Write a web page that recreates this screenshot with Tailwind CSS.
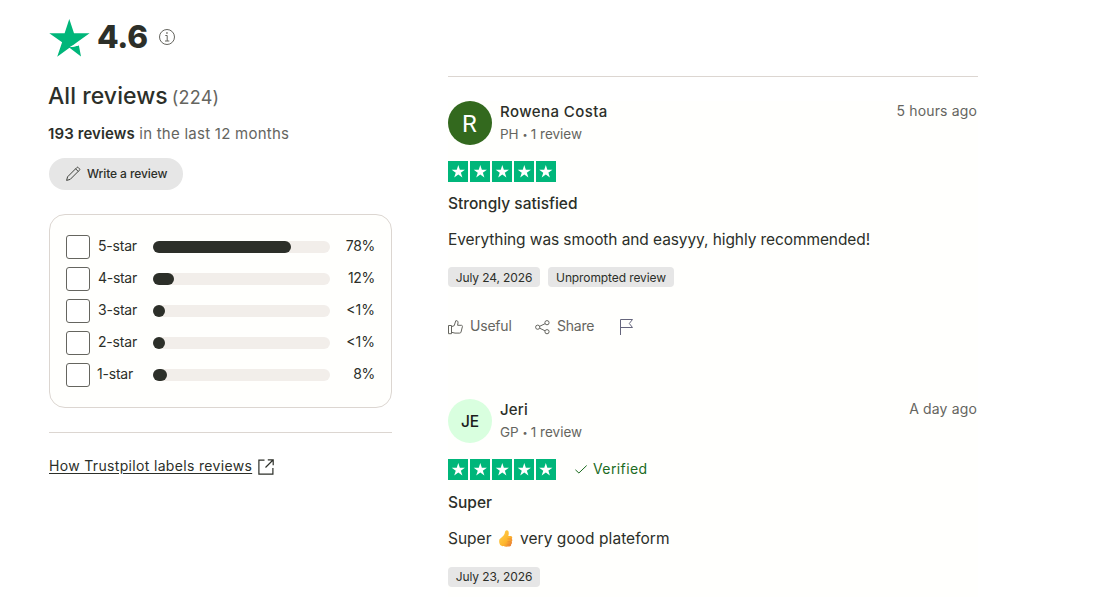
<!DOCTYPE html>
<html lang="en">
<head>
	<meta charset="UTF-8" />
	<meta name="viewport" content="width=device-width, initial-scale=1.0" />
	<script src="https://cdn.jsdelivr.net/npm/@tailwindcss/browser@4"></script>
	<title>All reviews</title>
</head>

<body class="bg-white font-['Inter',sans-serif] text-[#2c2f29] w-[1098px] h-[597px] overflow-hidden">
	<!-- shared symbols -->
	<svg class="hidden">
		<symbol id="stars" viewBox="0 0 108 21">
			<path fill="#00b67a" d="M0 0h20v21H0zM22 0h20v21H22zM44 0h20v21H44zM66 0h20v21H66zM88 0h20v21H88z" />
			<g fill="#fff">
				<path id="st" d="M10.3 3.9l1.55 4.8h5.05l-4.1 2.95 1.6 4.85-4.1-3-4.1 3 1.55-4.85L3.7 8.7h5.05zM10.3 13.5l2.9-.7 1.2 3.7z" />
				<use href="#st" x="22" /><use href="#st" x="44" /><use href="#st" x="66" /><use href="#st" x="87.5" />
			</g>
		</symbol>
	</svg>

	<div class="flex gap-14 pl-[49px]">
		<!-- summary -->
		<aside class="w-[343px] shrink-0 pt-[17px]">
			<div class="flex items-center h-10">
				<svg class="w-[41px] h-[39px]" viewBox="0 0 41 39"><path fill="#00b67a" d="M20.3 1l4.7 14.2h15.6L28 24.3l-6.8 4.9 8.7-1.8 2.1 11-11.5-8.7-12.3 9 4.9-14.4L.3 15.2h15.3z" /><path fill="#fff" d="M20.9 28.3l8.2-1.7-.2 1.1-5.8 1.4z" /></svg>
				<span class="w-[69px] pl-[7px] text-[31.5px] leading-10 font-extrabold tracking-[-0.3px]">4.6</span>
				<svg class="w-4 h-4" viewBox="0 0 16 16" fill="none" stroke="#65655f"><circle cx="8" cy="8" r="7.5" /><path d="M6.300 6.500H8.200V12M6 12h4.300" /><path fill="#65655f" stroke="none" d="M7.200 3.200h1.500v1.500H7.200z" /></svg>
			</div>
			<h2 class="mt-[23px] h-8 leading-8 text-[23px] font-medium whitespace-nowrap"><span class="-ml-px tracking-[0.05px]">All reviews</span> <span class="text-[18px] font-normal text-[#65655f] -ml-0.5 tracking-[0.2px]">(224)</span></h2>
			<p class="mt-2.5 h-6 leading-6 text-[15px] text-[#65655f] whitespace-nowrap"><b class="font-semibold text-[#2c2f29] -ml-px tracking-[0.1px]">193 reviews</b><span class="tracking-[0.25px]"> in the last 12 months</span></p>
			<button class="mt-3 flex items-center w-[134px] h-8 rounded-full bg-[#e6e6e6] pl-4 text-[12px] font-medium tracking-[-0.1px] whitespace-nowrap">
				<svg class="w-4 h-4 mr-1.5" viewBox="0 0 16 16" fill="none" stroke="#2c2f29" stroke-width=".9"><path d="M1.600 14.400l1-3.600 9.200-9.200c.5-.5 1-.5 1.500 0l1.100 1.100c.5.5.5 1 0 1.500l-9.200 9.200zM10.600 2.800l2.600 2.600" /></svg>
				Write a review
			</button>

			<div class="mt-6 h-[194px] rounded-2xl border border-[#dcd6d1] bg-[#fffffd] px-4 pt-4 text-[14px]">
				<div class="flex items-center h-8"><i class="w-6 h-6 rounded-[3px] border border-[#65655f] bg-white"></i><span class="ml-2 w-[55px] pb-[3px] tracking-[-0.2px]">5-star</span><div class="w-[177px] h-3 rounded-full bg-[#f2eeea]"><div class="h-3 rounded-full bg-[#2c2f29]" style="width:78%"></div></div><span class="ml-auto pb-[3px] tracking-[-0.3px]">78%</span></div>
				<div class="flex items-center h-8"><i class="w-6 h-6 rounded-[3px] border border-[#65655f] bg-white"></i><span class="ml-2 w-[55px] pb-[3px] tracking-[-0.3px]">4-star</span><div class="w-[177px] h-3 rounded-full bg-[#f2eeea]"><div class="h-3 rounded-full bg-[#2c2f29]" style="width:12%"></div></div><span class="ml-auto pb-[3px] tracking-[-0.3px]">12%</span></div>
				<div class="flex items-center h-8"><i class="w-6 h-6 rounded-[3px] border border-[#65655f] bg-white"></i><span class="ml-2 w-[55px] pb-[3px] tracking-[-0.2px]">3-star</span><div class="w-[177px] h-3 rounded-full bg-[#f2eeea]"><div class="h-3 rounded-full bg-[#2c2f29]" style="width:12px"></div></div><span class="ml-auto pb-[3px]">&lt;1%</span></div>
				<div class="flex items-center h-8"><i class="w-6 h-6 rounded-[3px] border border-[#65655f] bg-white"></i><span class="ml-2 w-[55px] pb-[3px] tracking-[-0.2px]">2-star</span><div class="w-[177px] h-3 rounded-full bg-[#f2eeea]"><div class="h-3 rounded-full bg-[#2c2f29]" style="width:12px"></div></div><span class="ml-auto pb-[3px]">&lt;1%</span></div>
				<div class="flex items-center h-8"><i class="w-6 h-6 rounded-[3px] border border-[#65655f] bg-white"></i><span class="ml-[7px] mr-px w-[55px] pb-[3px] tracking-[-0.2px]">1-star</span><div class="w-[177px] h-3 rounded-full bg-[#f2eeea]"><div class="h-3 rounded-full bg-[#2c2f29]" style="width:8%"></div></div><span class="ml-auto pb-[3px] tracking-[-0.3px]">8%</span></div>
			</div>

			<hr class="mt-6 border-[#dcd6d1]" />
			<a class="mt-[22px] flex items-center h-6 text-[14px] whitespace-nowrap">
				<span class="w-[209px] pb-[3px] underline underline-offset-2 tracking-[0.33px]">How Trustpilot labels reviews</span>
				<svg class="w-4 h-4" viewBox="0 0 16 16" fill="none" stroke="#2c2f29" stroke-width="1.2"><path d="M6.500 1.100H.9v14h14V9M9.800.8h5.400v5.400M15 1L7.500 8.500" /></svg>
			</a>
		</aside>

		<!-- review list -->
		<main class="w-[530px] pt-[76px]">
			<hr class="border-[#dcd6d1]" />
			<article class="mt-6 h-[298px] bg-[#fffffd]">
				<header class="flex h-11">
					<div class="w-11 h-11 pt-0.5 pr-px rounded-full bg-[#33691e] text-white text-[24px] flex items-center justify-center font-['Roboto',sans-serif]">R</div>
					<div class="ml-2 whitespace-nowrap">
						<div class="h-[22px] leading-[22px] text-[15px] font-medium tracking-[0.42px]">Rowena Costa</div>
						<div class="h-[22px] leading-[23px] text-[13.5px] text-[#65655f]">PH <span class="text-[9px] align-[1px]">•</span><span class="ml-0.5"></span>&#8202;1 review</div>
					</div>
					<time class="ml-auto pr-px leading-[19px] text-[14px] tracking-[0.15px] text-[#65655f]">5 hours ago</time>
				</header>
				<svg class="mt-4 w-[108px] h-[21px]"><use href="#stars" /></svg>
				<h3 class="mt-2.5 h-6 leading-6 text-[15.5px] font-medium whitespace-nowrap">Strongly satisfied</h3>
				<p class="mt-3 h-6 leading-6 text-[15.5px] tracking-[-0.09px] whitespace-nowrap">Everything was smooth and easyyy, highly recommended!</p>
				<div class="mt-[15px] flex gap-2 text-[12px] leading-[22px] whitespace-nowrap">
					<span class="w-[92px] h-5 rounded bg-[#e6e6e6] text-center tracking-[-0.1px]">July 24, 2026</span>
					<span class="w-[126px] h-5 rounded bg-[#e6e6e6] text-center tracking-[-0.1px]">Unprompted review</span>
				</div>
				<div class="mt-7 flex items-center h-6 text-[14px] text-[#65655f]">
					<svg class="w-4 h-4 mr-1.5" viewBox="0 0 16 16" fill="none" stroke="#65655f"><path d="M.5 6.500h3v8.200h-3zM3.500 7.700l2.700-1 1.600-5c1.700-.2 2.400.6 2.200 2.200L9.600 6.300h3.800c.8 0 1.200.6 1 1.400l-1.400 5.400c-.2.7-.6 1-1.300 1H7l-3.500-.8" /></svg>
					<span class="w-[65px] pb-[3px] tracking-[-0.2px]">Useful</span>
					<svg class="w-4 h-4 mr-1.5" viewBox="0 0 16 16" fill="none" stroke="#65655f"><circle cx="2.700" cy="8.200" r="2.100" /><circle cx="12" cy="3.700" r="2.100" /><circle cx="12" cy="12.700" r="2.100" /><path d="M4.700 7.300l5.300-2.600M4.700 9.200l5.300 2.600" /></svg>
					<span class="w-[62px] pb-[3px] tracking-[-0.2px]">Share</span>
					<svg class="w-4 h-4" viewBox="0 0 16 16" fill="none" stroke="#65657c"><path d="M1.500 16V.5h12L10.300 4.500l3.200 4H1.500" /></svg>
				</div>
			</article>
			<article class="bg-[#fffffd] h-[198px]">
				<header class="flex h-11">
					<div class="w-11 h-11 pt-px rounded-full bg-[#d9ffdf] text-[#1c1c1c] text-[15.5px] font-medium flex items-center justify-center tracking-[-0.2px]">JE</div>
					<div class="ml-2 whitespace-nowrap">
						<div class="h-[22px] leading-[22px] text-[15px] font-medium tracking-[0.2px]">Jeri</div>
						<div class="h-[22px] leading-[23px] text-[13.5px] text-[#65655f]">GP <span class="text-[9px] align-[1px]">•</span><span class="ml-0.5"></span>&#8202;1 review</div>
					</div>
					<time class="ml-auto pr-px leading-[19px] text-[14px] tracking-[0.15px] text-[#65655f]">A day ago</time>
				</header>
				<div class="mt-4 flex items-center h-[21px] text-[14px] text-[#1b6b1f]">
					<svg class="w-[108px] h-[21px]"><use href="#stars" /></svg>
					<svg class="ml-[19px] mr-1.5 w-3 h-3" viewBox="0 0 12 12" fill="none" stroke="#1b6b1f"><path d="M.4 5.800l3.500 3.200L11.700 1.500" /></svg>
					<span class="leading-[19px] pb-[3px] tracking-[0.4px]">Verified</span>
				</div>
				<h3 class="mt-[11px] h-6 leading-6 text-[15.5px] font-medium">Super</h3>
				<p class="mt-3 h-6 leading-6 text-[15.5px] flex items-center whitespace-nowrap">
					<span class="w-[50px]">Super</span>
					<svg class="w-4 h-[18px] mr-1.5" viewBox="0 0 16 18">
						<defs><linearGradient id="thumb" x1="0" y1="0" x2="1" y2="1"><stop offset="0" stop-color="#ffd34f" /><stop offset=".6" stop-color="#fdb52c" /><stop offset="1" stop-color="#e5703a" /></linearGradient></defs>
						<path fill="url(#thumb)" d="M1.500 9.200C2.800 7.800 5.300 6.500 6.500 4 7.100 2.600 6.800.4 8.700.3c2.200 0 2.500 2.700 1.600 5.700h2.400c1.700.2 1.900 1.900 1 2.800.9.800.8 2.300-.1 2.800.7.900.4 2.200-.5 2.600.3 1.400-.4 2.300-1.800 2.400-2.800.3-6.500.3-8.300-1C1.300 14.500.7 11 1.500 9.200z" />
						<path fill="none" stroke="#e88a2a" stroke-width=".6" d="M9.500 8.900h4M9.500 11.700h4M9.500 14.300h3.400" />
					</svg>
					<span class="tracking-[0.05px]">very good plateform</span>
				</p>
				<div class="mt-4 w-[92px] h-5 rounded bg-[#e6e6e6] text-center text-[12px] leading-5 tracking-[-0.1px] whitespace-nowrap">July 23, 2026</div>
			</article>
		</main>
	</div>
</body>
</html>
